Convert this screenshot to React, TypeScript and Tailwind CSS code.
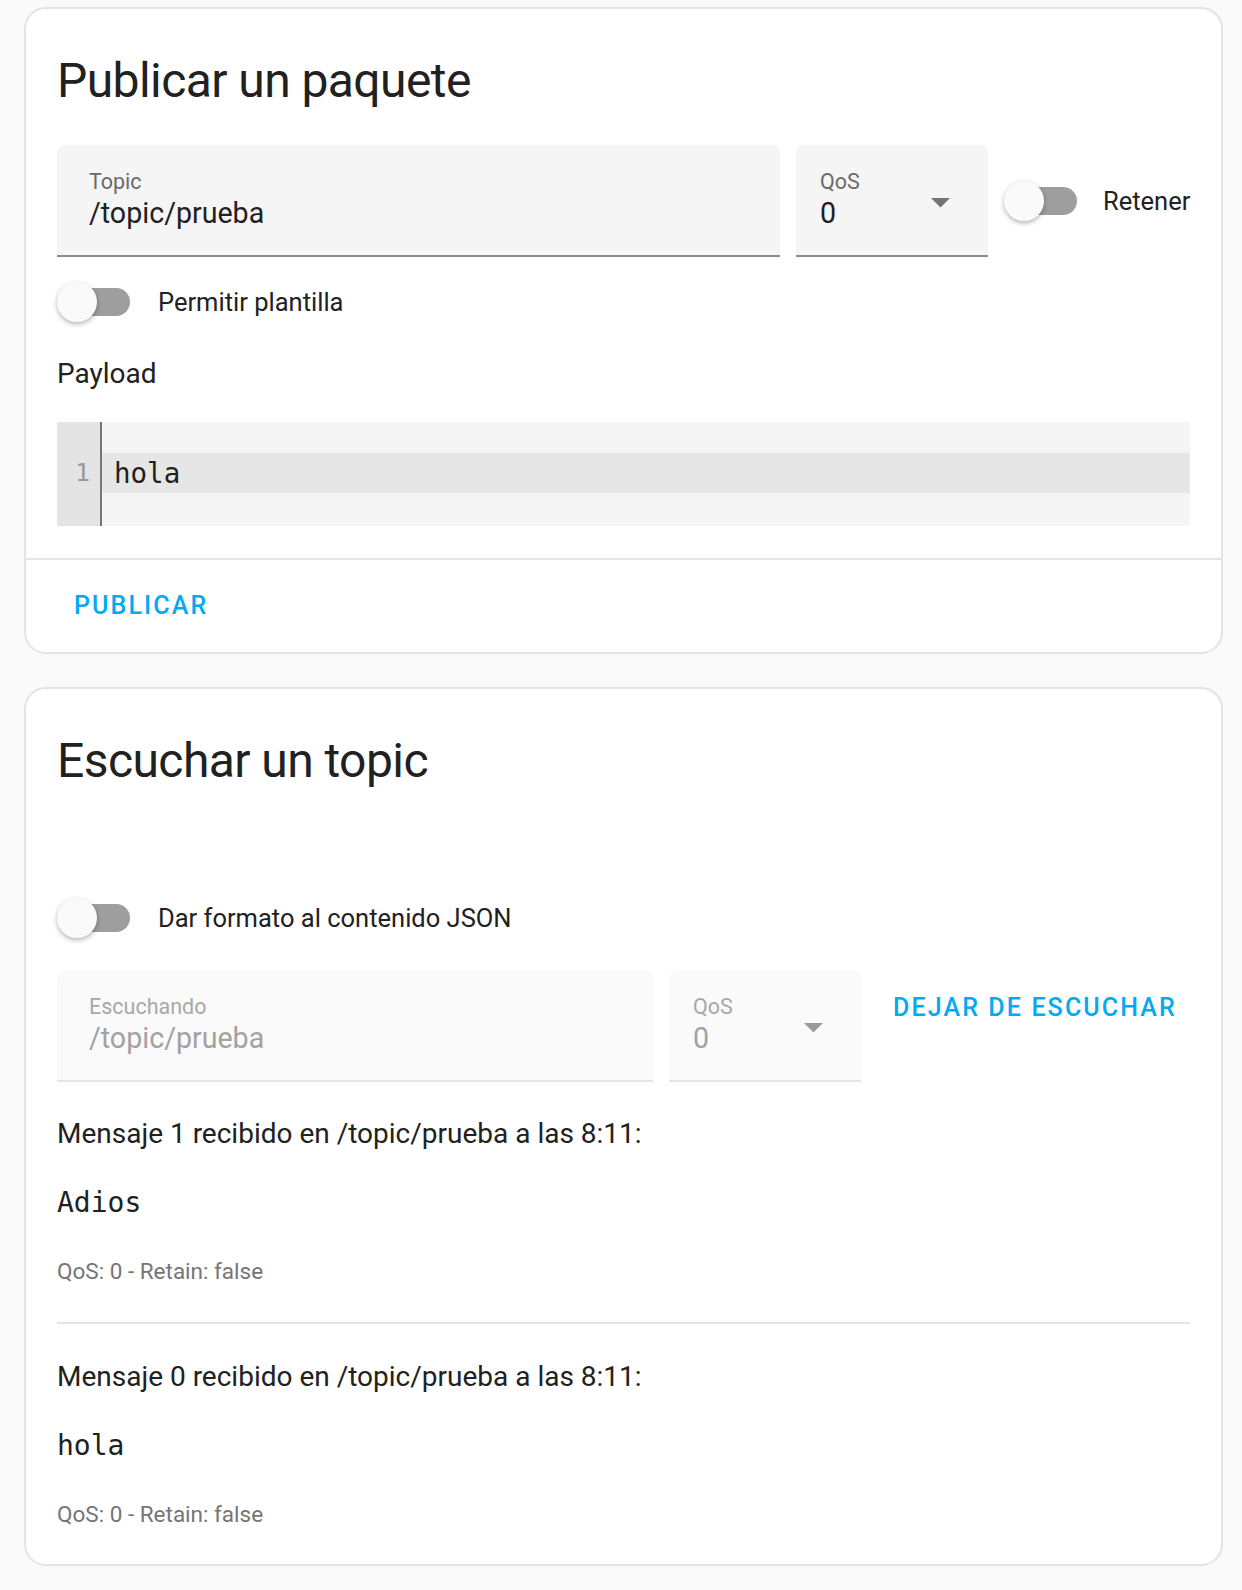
import React from "react";

const Switch = () => (
  <div className="relative h-[40px] w-[73px] shrink-0">
    <div className="absolute left-[5px] right-0 top-[6px] h-[28px] rounded-full bg-[#9e9e9e]" />
    <div className="absolute left-0 top-0 h-[40px] w-[40px] rounded-full bg-[#fafafa] shadow-[0_2px_5px_rgba(0,0,0,0.3)]" />
  </div>
);

const Arrow = ({ color }: { color: string }) => (
  <svg width="19" height="10" viewBox="0 0 19 10" className="shrink-0">
    <polygon points="0,0 19,0 9.5,9.5" fill={color} />
  </svg>
);

const TextField = ({
  width,
  label,
  value,
  disabled,
}: {
  width: string;
  label: string;
  value: string;
  disabled?: boolean;
}) => (
  <div
    className={`${width} h-[112px] shrink-0 rounded-t-[8px] border-b-2 pl-[32px] pt-[25px] ${
      disabled ? "border-[#e4e4e4] bg-[#fafafa]" : "border-[#8c8c8c] bg-[#f5f5f5]"
    }`}
  >
    <div className={`text-[21.5px] leading-[24px] ${disabled ? "text-[#a8a8a8]" : "text-[#6a6a6a]"}`}>{label}</div>
    <div className={`mt-[1px] text-[28.6px] leading-[36px] ${disabled ? "text-[#a2a2a2]" : "text-[#212121]"}`}>{value}</div>
  </div>
);

const QosSelect = ({ disabled }: { disabled?: boolean }) => (
  <div
    className={`flex h-[112px] w-[192px] shrink-0 items-start justify-between rounded-t-[8px] border-b-2 pl-[24px] pr-[38px] pt-[25px] ${
      disabled ? "border-[#e4e4e4] bg-[#fafafa]" : "border-[#8c8c8c] bg-[#f5f5f5]"
    }`}
  >
    <div>
      <div className={`text-[21.5px] leading-[24px] ${disabled ? "text-[#a8a8a8]" : "text-[#6a6a6a]"}`}>QoS</div>
      <div className={`mt-[1px] text-[28.6px] leading-[36px] ${disabled ? "text-[#a2a2a2]" : "text-[#212121]"}`}>0</div>
    </div>
    <div className="mt-[28px]">
      <Arrow color={disabled ? "#9a9a9a" : "#747474"} />
    </div>
  </div>
);

const Message = ({ n, payload, last }: { n: number; payload: string; last?: boolean }) => (
  <div>
    <p className="text-[28px] leading-[40px] text-[#212121]">
      Mensaje {n} recibido en /topic/prueba a las 8:11:
    </p>
    <pre className="mt-[29px] font-['DejaVu_Sans_Mono',monospace] text-[28px] leading-[40px] text-[#212121]">{payload}</pre>
    <p className="mt-[33px] text-[22.5px] leading-[30px] text-[#757575]">QoS: 0 - Retain: false</p>
    {!last && <div className="mb-[33px] mt-[36px] h-[2px] bg-[#e4e4e4]" />}
  </div>
);

export default function App() {
  return (
    <div className="min-h-[1590px] bg-[#fafafa] pl-[24px] pt-[7px] font-['Roboto',sans-serif]">
      {/* publish */}
      <div className="w-[1199px] rounded-[22px] border-2 border-[#e4e4e4] bg-white">
        <h1 className="px-[31px] pt-[24px] text-[48px] leading-[96px] tracking-[-0.012em] text-[#212121]">
          Publicar un paquete
        </h1>
        <div className="px-[31px] pb-[32px] pt-[16px]">
          <div className="flex items-center">
            <TextField width="w-[723px]" label="Topic" value="/topic/prueba" />
            <div className="ml-[16px]">
              <QosSelect />
            </div>
            <div className="ml-[16px] flex items-center">
              <Switch />
              <span className="ml-[26px] text-[25.5px] text-[#212121]">Retener</span>
            </div>
          </div>

          <div className="mt-[25px] flex items-center">
            <Switch />
            <span className="ml-[28px] text-[25.5px] text-[#212121]">Permitir plantilla</span>
          </div>

          <div className="mt-[32px] text-[28px] leading-[40px] text-[#212121]">Payload</div>

          <div className="mt-[28px] flex h-[104px] bg-[#f5f5f5]">
            <div className="w-[45px] shrink-0 border-r-2 border-[#767676] bg-[#e4e4e4] pr-[10px] pt-[31px] text-right font-['DejaVu_Sans_Mono',monospace] text-[25px] leading-[40px] text-[#999]">
              1
            </div>
            <div className="flex-1 pt-[31px]">
              <div className="h-[40px] bg-[#e6e6e6] pl-[12px] font-['DejaVu_Sans_Mono',monospace] text-[27.5px] leading-[40px] text-[#212121]">
                hola
              </div>
            </div>
          </div>
        </div>
        <div className="h-[2px] bg-[#e4e4e4]" />
        <div className="flex h-[92px] items-center pl-[48px]">
          <span className="text-[25px] font-medium tracking-[0.085em] text-[#03a9f4]">PUBLICAR</span>
        </div>
      </div>

      {/* subscribe */}
      <div className="mt-[33px] w-[1199px] rounded-[22px] border-2 border-[#e4e4e4] bg-white">
        <h1 className="px-[31px] pt-[24px] text-[48px] leading-[96px] tracking-[-0.012em] text-[#212121]">
          Escuchar un topic
        </h1>
        <div className="px-[31px] pb-[35px]">
          <div className="mt-[89px] flex items-center">
            <Switch />
            <span className="ml-[28px] text-[25.5px] text-[#212121]">Dar formato al contenido JSON</span>
          </div>

          <div className="mt-[32px] flex items-start">
            <TextField width="w-[596px]" label="Escuchando" value="/topic/prueba" disabled />
            <div className="ml-[16px]">
              <QosSelect disabled />
            </div>
            <div className="ml-[16px] flex h-[76px] shrink-0 items-center whitespace-nowrap px-[16px]">
              <span className="text-[25px] font-medium tracking-[0.085em] text-[#03a9f4]">DEJAR DE ESCUCHAR</span>
            </div>
          </div>

          <div className="mt-[32px]">
            <Message n={1} payload="Adios" />
            <Message n={0} payload="hola" last />
          </div>
        </div>
      </div>
    </div>
  );
}
